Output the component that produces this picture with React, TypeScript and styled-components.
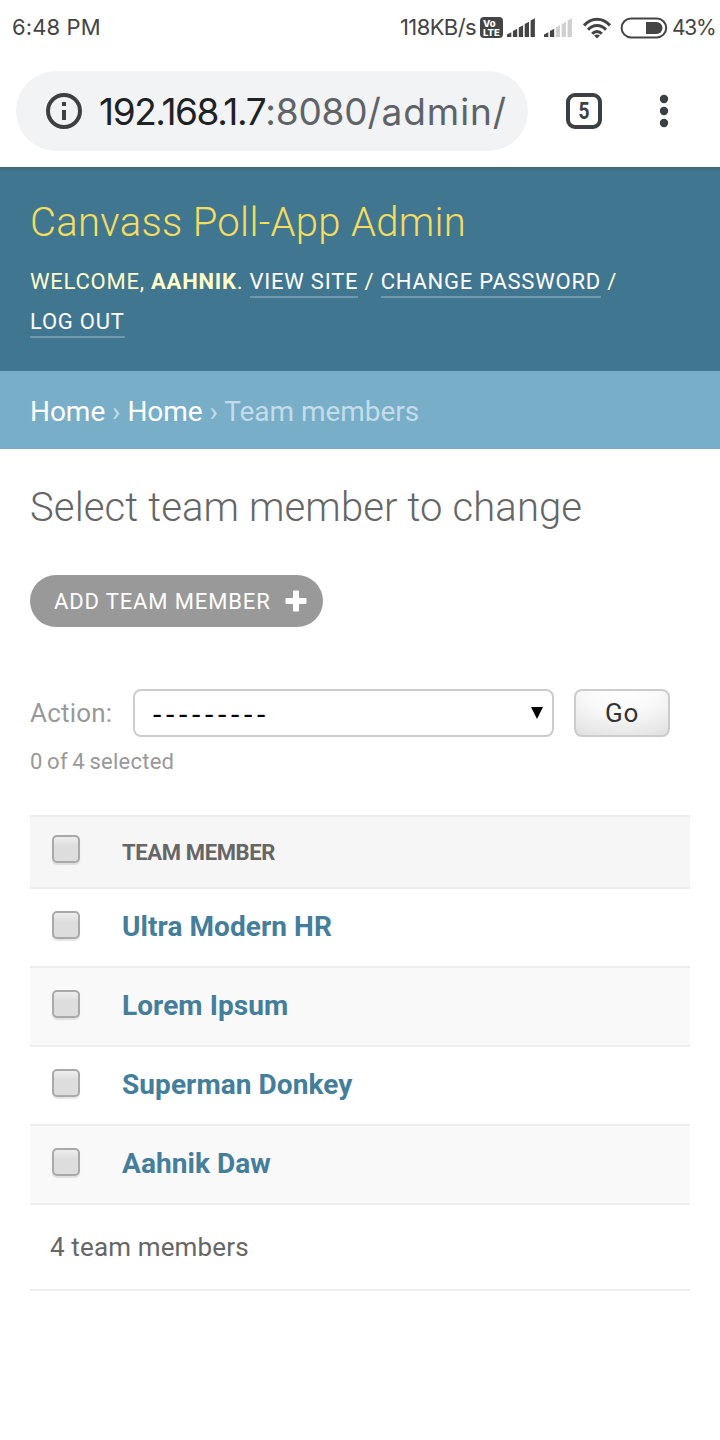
import React from 'react';
import styled, { createGlobalStyle } from 'styled-components';

const GlobalStyle = createGlobalStyle`
  *, *::before, *::after { box-sizing: border-box; }
  body { margin: 0; background: #fff; }
`;

const Screen = styled.div`
  display: flex;
  flex-direction: column;
  width: 720px;
  height: 1440px;
  overflow: hidden;
  background: #fff;
  color: #666;
  font-family: Roboto, 'Liberation Sans', sans-serif;
  white-space: nowrap;
`;

const StatusBar = styled.div`
  display: flex;
  align-items: center;
  justify-content: space-between;
  height: 55px;
  flex: none;
  padding: 0 0 0 12px;
  color: #444;
  font-family: Inter, Roboto, sans-serif;
`;

const StatusGroup = styled.div`
  display: flex;
  align-items: center;
`;

const StatusText = styled.span<{ $size?: number; $spacing?: number }>`
  font-size: ${(p) => p.$size ?? 22}px;
  letter-spacing: ${(p) => p.$spacing ?? 0}px;
  line-height: 55px;
`;

const BatteryLevel = styled(StatusText)`
  width: 48px;
  margin-left: 4px;
`;

const StatusIcon = styled.svg<{ $gap: number }>`
  display: block;
  flex: none;
  margin-left: ${(p) => p.$gap}px;
`;

const VoLteBadge = styled.span`
  display: flex;
  flex-direction: column;
  justify-content: center;
  align-items: flex-start;
  width: 23px;
  height: 21px;
  margin-left: 4px;
  padding-left: 3px;
  border-radius: 4px;
  background: #444;
  color: #fff;
  font-size: 9.5px;
  font-weight: 800;
  line-height: 9px;
`;

const BrowserBar = styled.div`
  display: flex;
  align-items: center;
  height: 112px;
  flex: none;
  padding: 0 50px 0 16px;
`;

const AddressPill = styled.div`
  display: flex;
  align-items: center;
  width: 512px;
  height: 80px;
  padding: 0 20px 0 30px;
  border-radius: 40px;
  background: #f1f3f4;
`;

const Address = styled.div`
  flex: 1;
  margin-left: 17px;
  padding-top: 2px;
  overflow: hidden;
  color: #5f6368;
  font-family: Inter, Roboto, sans-serif;
  font-size: 37px;
  line-height: 60px;
`;

const Host = styled.span`
  color: #202124;
  letter-spacing: -1.4px;
`;

const Port = styled.span`
  letter-spacing: -0.2px;
`;

const Path = styled.span`
  letter-spacing: 0.9px;
`;

const TabCount = styled.div`
  display: flex;
  align-items: center;
  justify-content: center;
  width: 36px;
  height: 36px;
  margin-left: 38px;
  border: 4px solid #3c4043;
  border-radius: 9px;
  color: #3c4043;
  font-size: 24px;
  font-weight: 700;
  line-height: 28px;
  span { transform: scaleX(0.8); }
`;

const MenuDots = styled.svg`
  display: block;
  margin-left: auto;
`;

const AdminHeader = styled.header`
  height: 204px;
  flex: none;
  padding: 31px 30px 0;
  background: linear-gradient(#3d6576 0, #417690 5px);
  color: #ffc;
`;

const SiteName = styled.h1`
  margin: 0;
  color: #f5dd5d;
  font-size: 40px;
  font-weight: 300;
  line-height: 50px;
  letter-spacing: 0.32px;
`;

const UserTools = styled.div`
  margin-top: 14px;
  font-size: 22px;
  line-height: 40px;
  letter-spacing: 0.77px;
  text-transform: uppercase;
  white-space: normal;
`;

const ToolLink = styled.a`
  padding-bottom: 2px;
  border-bottom: 2px solid rgba(255, 255, 255, 0.25);
  color: #fff;
  white-space: nowrap;
`;

const Breadcrumbs = styled.nav`
  height: 78px;
  flex: none;
  padding: 0 30px;
  background: #79aec8;
  color: #c4dce8;
  font-size: 28px;
  letter-spacing: -0.04px;
  line-height: 82px;
`;

const Crumb = styled.a`
  color: #fff;
`;

const Content = styled.main`
  display: flex;
  flex-direction: column;
  align-items: flex-start;
  padding: 34px 30px 0;
`;

const PageTitle = styled.h2`
  margin: 0;
  font-size: 40px;
  font-weight: 300;
  letter-spacing: 0.12px;
  line-height: 50px;
`;

const AddButton = styled.a`
  display: flex;
  align-items: center;
  height: 52px;
  width: 293px;
  margin-top: 42px;
  padding: 0 16px 0 24px;
  justify-content: space-between;
  border-radius: 26px;
  background: #999;
  color: #fff;
  font-size: 22px;
  letter-spacing: 0.87px;
  text-transform: uppercase;
`;

const Actions = styled.div`
  display: flex;
  align-items: center;
  width: 640px;
  height: 48px;
  margin-top: 62px;
  color: #999;
  font-size: 26px;
`;

const ActionLabel = styled.span`
  width: 83px;
  letter-spacing: 0.2px;
`;

const ActionSelect = styled.div`
  display: flex;
  align-items: center;
  justify-content: space-between;
  width: 421px;
  height: 48px;
  margin-left: 20px;
  padding: 0 9px 0 17px;
  border: 2px solid #ccc;
  border-radius: 8px;
  background: #fff;
  color: #000;
`;

const EmptyChoice = styled.span`
  padding: 3px 0 0 1px;
  font-size: 30px;
  letter-spacing: 4.7px;
`;

const GoButton = styled.button`
  width: 96px;
  height: 48px;
  margin-left: 20px;
  padding: 0;
  border: 2px solid #ccc;
  border-radius: 8px;
  background: radial-gradient(ellipse 90% 110% at 50% 0, #fff 0, #f9f9f9 45%, #e3e3e3 100%);
  color: #333;
  font: 400 26px/44px Roboto, sans-serif;
  letter-spacing: 0.8px;
`;

const Counter = styled.div`
  margin-top: 9px;
  font-size: 22px;
  line-height: 32px;
  letter-spacing: 0.25px;
  word-spacing: -1.2px;
  color: #999;
`;

const Results = styled.div`
  width: 660px;
  margin-top: 37px;
  border-top: 2px solid #eee;
`;

const Row = styled.div<{ $shade: string; $height: number }>`
  display: flex;
  align-items: center;
  height: ${(p) => p.$height}px;
  padding-left: 22px;
  border-bottom: 2px solid #eee;
  background: ${(p) => p.$shade};
`;

const Checkbox = styled.span<{ $lift?: number }>`
  width: 28px;
  height: 28px;
  margin: -${(p) => p.$lift ?? 5}px 42px 0 0;
  border: 2px solid #a9a9a9;
  border-radius: 5px;
  background: linear-gradient(#eee 0, #ddd 38%, #ddd 100%);
  box-shadow: 0 2px 1px rgba(0, 0, 0, 0.1);
`;

const ColumnTitle = styled.span`
  padding-top: 2px;
  font-size: 22px;
  font-weight: 700;
  letter-spacing: -0.35px;
  line-height: 30px;
`;

const MemberLink = styled.a`
  margin-top: -1px;
  color: #447e9b;
  font-size: 28px;
  font-weight: 700;
  letter-spacing: 0.07px;
  line-height: 36px;
`;

const Paginator = styled.div`
  height: 86px;
  padding-left: 20px;
  border-bottom: 2px solid #eee;
  font-size: 26px;
  line-height: 84px;
  letter-spacing: 0.14px;
`;

const members = ['Ultra Modern HR', 'Lorem Ipsum', 'Superman Donkey', 'Aahnik Daw'];

const barPath = (i: number) => {
  const x = i * 5.9;
  const top = 14.2 - i * 3.5;
  return `M${x} 19V${top + 2.2}L${x + 4.3} ${top}V19Z`;
};

function Signal({ strength, gap }: { strength: number; gap: number }) {
  return (
    <StatusIcon $gap={gap} width="28" height="20" viewBox="0 0 28 20">
      {[0, 1, 2, 3, 4].map((i) => (
        <path key={i} d={barPath(i)} fill={i < strength ? '#444' : '#d0d0d0'} />
      ))}
    </StatusIcon>
  );
}

export default function App() {
  return (
    <Screen>
      <GlobalStyle />
      <StatusBar>
        <StatusText $spacing={0.1}>6:48 PM</StatusText>
        <StatusGroup>
          <StatusText $spacing={-0.6}>118KB/s</StatusText>
          <VoLteBadge>
            <span>Vo</span>
            <span>LTE</span>
          </VoLteBadge>
          <Signal strength={5} gap={4} />
          <Signal strength={2} gap={9} />
          <StatusIcon $gap={11} width="28" height="22" viewBox="0 0 28 22" fill="none" stroke="#444" strokeWidth="3">
            <path d="M1 8.5C8.2 .3 19.8 .3 27 8.5" />
            <path d="M5 12.7C10 7 18 7 23 12.7" />
            <path d="M9.2 16.8C12 13.8 16 13.8 18.8 16.8" />
            <path d="M11 18.6C12.8 17 15.2 17 17 18.6L14 21.6Z" fill="#444" stroke="none" />
          </StatusIcon>
          <StatusIcon $gap={9} width="48" height="22" viewBox="0 0 48 22">
            <rect x="1.6" y="1.4" width="44.6" height="19" rx="9.5" fill="none" stroke="#444" strokeWidth="2" />
            <path d="M26 5H36.5A6 6 0 0 1 36.5 17H26Z" fill="#444" />
          </StatusIcon>
          <BatteryLevel $size={21} $spacing={-1.3}>43%</BatteryLevel>
        </StatusGroup>
      </StatusBar>

      <BrowserBar>
        <AddressPill>
          <svg width="36" height="36" viewBox="0 0 36 36">
            <circle cx="18" cy="18" r="16" fill="none" stroke="#3c4043" strokeWidth="4" />
            <path d="M16 9h4v4h-4zM16 17h4v10h-4z" fill="#3c4043" />
          </svg>
          <Address>
            <Host>192.168.1.7</Host>
            <Port>:8080</Port>
            <Path>/admin/</Path>
          </Address>
        </AddressPill>
        <TabCount>
          <span>5</span>
        </TabCount>
        <MenuDots width="12" height="36" viewBox="0 0 12 36" fill="#3c4043">
          <circle cx="6" cy="6" r="4.2" />
          <circle cx="6" cy="18" r="4.2" />
          <circle cx="6" cy="30" r="4.2" />
        </MenuDots>
      </BrowserBar>

      <AdminHeader>
        <SiteName>Canvass Poll-App Admin</SiteName>
        <UserTools>
          Welcome, <strong>Aahnik</strong>. <ToolLink>View site</ToolLink> / <ToolLink>Change password</ToolLink> /{' '}
          <br />
          <ToolLink>Log out</ToolLink>
        </UserTools>
      </AdminHeader>

      <Breadcrumbs>
        <Crumb>Home</Crumb> › <Crumb>Home</Crumb> › Team members
      </Breadcrumbs>

      <Content>
        <PageTitle>Select team member to change</PageTitle>
        <AddButton>
          Add team member
          <svg width="22" height="22" viewBox="0 0 22 22">
            <path
              d="M9 .5h4q1 0 1 1V8h6.500q1 0 1 1v4q0 1-1 1H14v6.500q0 1-1 1H9q-1 0-1-1V14H1.500q-1 0-1-1V9q0-1 1-1H8V1.500q0-1 1-1Z"
              fill="#fff"
            />
          </svg>
        </AddButton>
        <Actions>
          <ActionLabel>Action:</ActionLabel>
          <ActionSelect>
            <EmptyChoice>---------</EmptyChoice>
            <svg width="12" height="12" viewBox="0 0 12 12">
              <path d="M0 0H12L6 12Z" />
            </svg>
          </ActionSelect>
          <GoButton>Go</GoButton>
        </Actions>
        <Counter>0 of 4 selected</Counter>

        <Results>
          <Row $shade="#f6f6f6" $height={72}>
            <Checkbox $lift={7} />
            <ColumnTitle>TEAM MEMBER</ColumnTitle>
          </Row>
          {members.map((name, i) => (
            <Row key={name} $shade={i % 2 ? '#f9f9f9' : '#fff'} $height={79}>
              <Checkbox />
              <MemberLink>{name}</MemberLink>
            </Row>
          ))}
          <Paginator>4 team members</Paginator>
        </Results>
      </Content>
    </Screen>
  );
}
